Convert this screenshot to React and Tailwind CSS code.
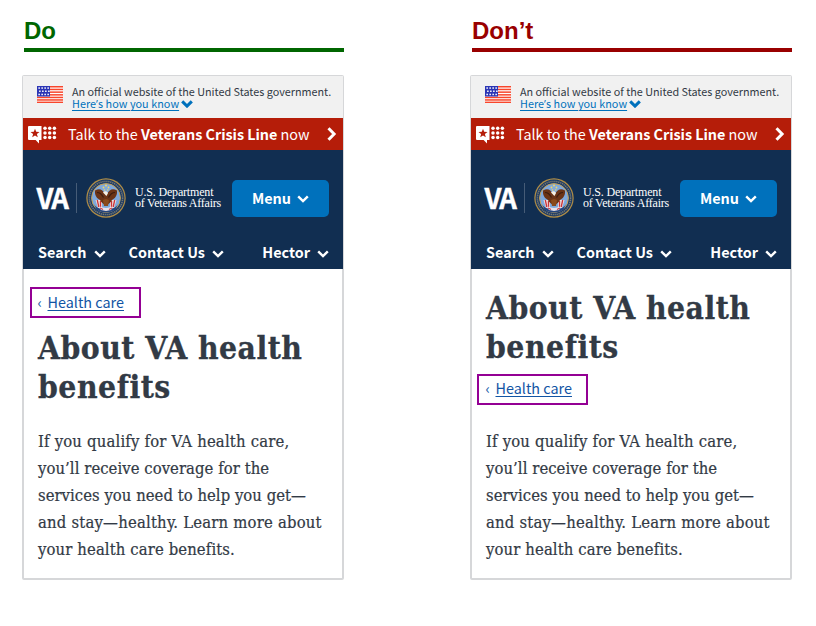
import React from "react";

const SANS = "font-['Noto_Sans_CJK_SC',sans-serif]";
const SLAB = "font-['DejaVu_Serif_Condensed','DejaVu_Serif',serif] [font-stretch:condensed]";

function Chevron({ className, width = 11, weight = 2.4 }) {
  return (
    <svg className={className} width={width} height={(width * 8) / 12} viewBox="0 0 12 8" fill="none" stroke="currentColor" strokeWidth={weight}>
      <path d="M1.2 1.4 6 6.1 10.8 1.4" />
    </svg>
  );
}

function Flag() {
  return (
    <svg className="mt-px" width="26" height="17" viewBox="0 0 26 17">
      <rect width="26" height="17" fill="#fff" />
      {[0, 2.7, 5.4, 8.1, 10.7, 13.2, 15.6].map((y) => (
        <rect key={y} y={y} width="26" height="1.5" fill="#f8462c" />
      ))}
      <rect width="13" height="10.5" fill="#2b35b5" />
      {[1.3, 4.5, 7.7].map((y, r) =>
        [1.4, 4.4, 7.4, 10.4].map((x) => (
          <rect key={x + "-" + y} x={x + (r === 1 ? 0.7 : 0)} y={y} width="1.5" height="1.5" fill="#fff" />
        ))
      )}
    </svg>
  );
}

function CrisisIcon() {
  return (
    <svg className="mt-px" width="29" height="18" viewBox="0 0 29 18" fill="#fff">
      <path d="M1 0h12.5v14H11v3.4L7.600 14H1a1 1 0 0 1-1-1V1a1 1 0 0 1 1-1Z" />
      <path fill="#b51d09" d="m7 2.700 1.200 3.100 3.300.2-2.600 2.100.9 3.200L7 9.500l-2.800 1.800.9-3.200L2.500 6l3.300-.2Z" />
      {[2.2, 6.9, 11.600].map((y) =>
        [17, 21.700, 26.400].map((x) => <circle key={x + "-" + y} cx={x} cy={y} r="1.750" />)
      )}
    </svg>
  );
}

function Seal() {
  return (
    <svg width="40" height="40" viewBox="0 0 40 40">
      <circle cx="20" cy="20" r="19.700" fill="#b08d45" />
      <circle cx="20" cy="20" r="18.500" fill="#1b3a66" />
      <circle cx="20" cy="20" r="16.600" fill="none" stroke="#77786f" strokeWidth="1.500" strokeDasharray="1.300 .7" />
      <circle cx="20" cy="20" r="14.400" fill="#7fa9dc" stroke="#c9a04e" strokeWidth="1" />
      <path d="M7.500 25c3 9 22 9 25 0l-3 6.500c-5 4-14 4-19 0Z" fill="#24457e" />
      <g fill="#f0d56a">
        <circle cx="20" cy="7.500" r="1" />
        <circle cx="17.500" cy="9.500" r=".9" />
        <circle cx="22.500" cy="9.500" r=".9" />
        <circle cx="18.500" cy="12" r=".8" />
        <circle cx="21.700" cy="12" r=".8" />
      </g>
      <path d="M9.500 22h6.500v8h-4Zm14.500 0h6.500L28 30h-4Z" fill="#eadfdf" />
      <path d="M11.300 22l1.500 7M14.500 23v7M25.500 23v7M28.700 22l-1.500 7" stroke="#cc3338" strokeWidth="1.300" />
      <path d="M9 12.500c4.500-2.500 7.500-1 10 3.500l1 1.500 1-1.500c2.500-4.500 5.500-6 10-3.500.5 5-2 8-5 9.500-1.300 2.500-3 4-6 5-3-1-4.700-2.500-6-5-3-1.500-5.500-4.500-5-9.500Z" fill="#6b3416" />
      <path d="M11 14.500c3 0 5 2 6.500 5M29 14.500c-3 0-5 2-6.500 5" fill="none" stroke="#3c1d10" strokeWidth="1.200" />
      <path d="m17 22 3-1 3 1-1 6h-4Z" fill="#8a4a1c" />
      <path d="M17 14.500c1.500-1.700 4-1.500 5 .5L20.500 18l-2-2Z" fill="#f6efe2" />
      <path d="M13 29c2-1 4 1 7 1s5-2 7-1l-2 3-5 1-5-1Z" fill="#e9e2ea" />
      <path d="m14 30 3 1.500m6 0 3-1.500" stroke="#cc3f46" strokeWidth="1.200" />
    </svg>
  );
}

function NavItem({ label }) {
  return (
    <span className="flex items-center gap-[7px]">
      <span>{label}</span>
      <Chevron width={12} className="mt-[4px]" />
    </span>
  );
}

function SiteHeader() {
  return (
    <header className={`-mx-px ${SANS}`}>
      <div className="flex h-[42px] bg-[#f1f1f1] pl-[14px] pt-[9px]">
        <Flag />
        <div className="ml-[9px] whitespace-nowrap text-[10.8px] leading-[12px] text-[#323a45]">
          <div>An official website of the United States government.</div>
          <div className="flex items-center text-[#0071bc]">
            <span className="tracking-[0.050px] underline decoration-1 underline-offset-2">
              Here<span className="font-['Open_Sans',sans-serif] leading-[10px]">’</span>s how you know
            </span>
            <Chevron width={12} weight={3} className="ml-[2px] mt-[2px]" />
          </div>
        </div>
      </div>
      <div className="flex h-8 items-center bg-[#b51d09] pl-[5px] text-white">
        <CrisisIcon />
        <span className="ml-[11px] whitespace-nowrap text-[14.4px] leading-8 tracking-[-0.035px]">
          Talk to the <b>Veterans Crisis Line</b> now
        </span>
        <svg className="ml-auto mr-[6px]" width="10" height="14" viewBox="0 0 10 14" fill="none" stroke="#fff" strokeWidth="3">
          <path d="m1.500 1.200 5.600 5.800-5.600 5.800" />
        </svg>
      </div>
      <div className="h-[119px] bg-[#112e51] text-white">
        <div className="flex h-[96px] items-center pl-[13.500px] pr-[14px]">
          <span className="-mt-[3px] w-[32.500px] text-[27.500px] font-bold leading-[30px] tracking-[-1.8px] [-webkit-text-stroke:0.4px_#fff]">VA</span>
          <span className="ml-[7px] h-[30px] w-px bg-[#465c77]" />
          <span className="ml-[9px]"><Seal /></span>
          <span className="ml-[9px] w-[90px] whitespace-nowrap font-['Liberation_Serif',serif] text-[12px] leading-[11.500px]">
            <span className="block tracking-[-0.180px]">U.S. Department</span>
            <span className="block tracking-[-0.220px]">of Veterans Affairs</span>
          </span>
          <span className="ml-auto flex h-[37px] w-[97px] items-center justify-center gap-[6px] rounded-[5px] bg-[#0071bc] text-[14.400px] font-bold">
            Menu
            <Chevron width={12} className="mt-px" />
          </span>
        </div>
        <div className="-mt-px flex pl-[15px] text-[14.400px] font-bold leading-[14px]">
          <NavItem label="Search" />
          <span className="ml-[23px]"><NavItem label="Contact Us" /></span>
          <span className="ml-auto mr-[14px]"><NavItem label="Hector" /></span>
        </div>
      </div>
    </header>
  );
}

function Breadcrumb({ className, textClassName }) {
  return (
    <div className={`h-[31px] w-[111px] border-2 border-[#940094] text-[14.400px] text-[#1254a4] ${SANS} ${className}`}>
      <div className={`flex ${textClassName}`}>
        <span className="w-[10px]">‹</span>
        <span className="whitespace-nowrap underline decoration-1 underline-offset-2">Health care</span>
      </div>
    </div>
  );
}

function Title({ className }) {
  return (
    <h1 className={`ml-[14px] whitespace-nowrap text-[31.500px] font-bold leading-[39px] text-[#323a45] [-webkit-text-stroke:0.3px_#323a45] ${SLAB} ${className}`}>
      <span className="block tracking-[0.480px]">About VA health</span>
      <span className="block tracking-[0.550px]">benefits</span>
    </h1>
  );
}

function Intro({ className }) {
  return (
    <p className={`ml-[14px] whitespace-nowrap text-[16.500px] leading-[27px] text-[#323a45] [-webkit-text-stroke:0.2px_#323a45] ${SLAB} ${className}`}>
      <span className="block tracking-[0.190px]">If you qualify for VA health care,</span>
      <span className="block tracking-[0.060px]">you’ll receive coverage for the</span>
      <span className="block tracking-[0.040px]">services you need to help you get—</span>
      <span className="block tracking-[0.210px]">and stay—healthy. Learn more about</span>
      <span className="block tracking-[0.120px]">your health care benefits.</span>
    </p>
  );
}

function Example({ label, tone, children }) {
  return (
    <section className="w-[322px]">
      <h2 className={`ml-[2px] h-[37px] w-[320px] border-b-4 pt-[2px] font-['Liberation_Sans',sans-serif] text-[24px] font-bold leading-[28px] ${tone}`}>
        {label}
      </h2>
      <div className="mt-[23px] h-[505px] rounded-[2px] border-2 border-t border-[#d6d7d9]">
        <SiteHeader />
        {children}
      </div>
    </section>
  );
}

export default function App() {
  return (
    <main className="flex h-[626px] w-[816px] gap-[126px] bg-white pl-[22px] pt-[15px]">
      <Example label="Do" tone="border-[#006600] text-[#006600]">
        <Breadcrumb className="ml-[6px] mt-[18px]" textClassName="pl-[5.500px] leading-[25px]" />
        <Title className="mt-[10px]" />
        <Intro className="mt-[22px]" />
      </Example>
      <Example label="Don’t" tone="border-[#990000] text-[#990000]">
        <Title className="mt-[19px]" />
        <Breadcrumb className="ml-[5px] mt-[8px]" textClassName="pl-[6.500px] leading-[23px]" />
        <Intro className="mt-[23px]" />
      </Example>
    </main>
  );
}
